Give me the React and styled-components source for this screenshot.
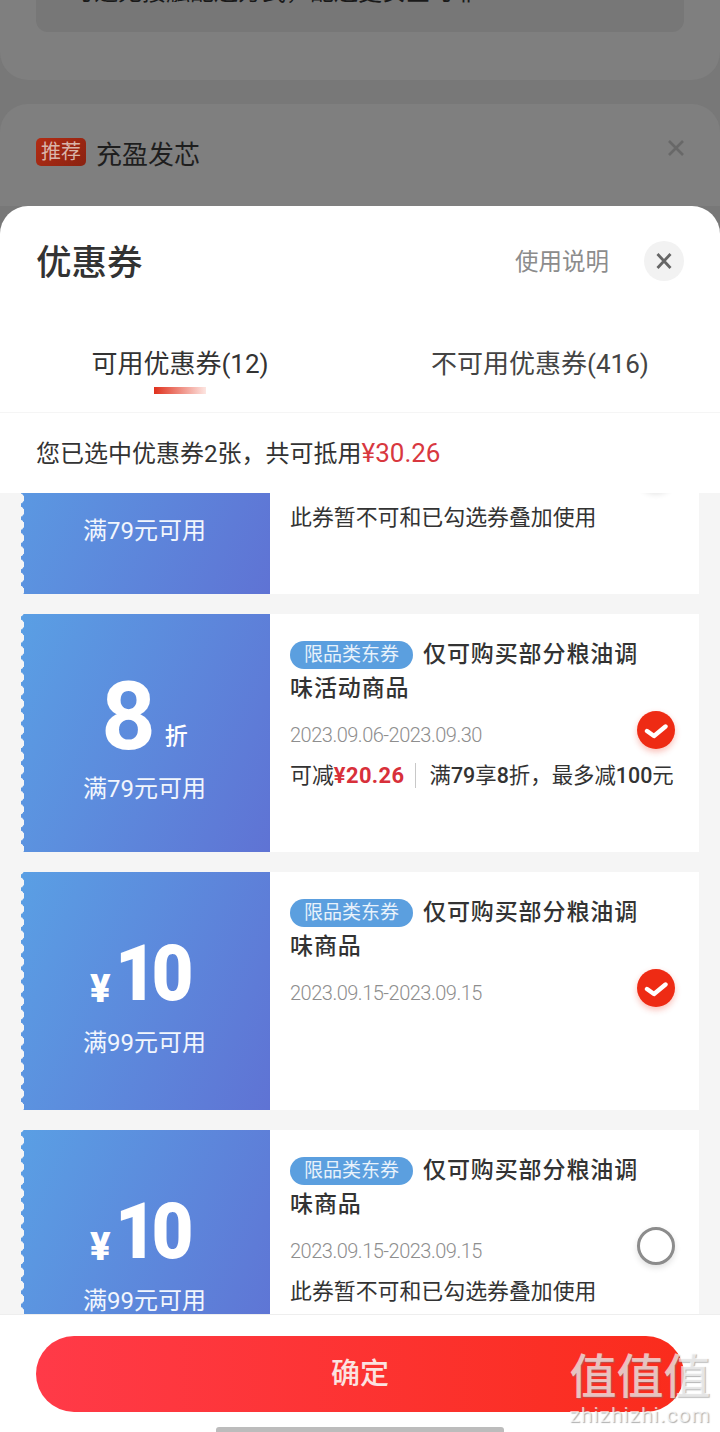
import React from 'react'
import styled, { createGlobalStyle } from 'styled-components'

const fontStack = `Roboto, "Noto Sans CJK SC", sans-serif`

const coupons = [
  {
    id: 1,
    kind: 'rate',
    value: '8',
    unit: '折',
    limit: '满79元可用',
    title: '仅可购买部分粮油调味活动商品',
    date: '2023.09.06-2023.09.30',
    blocked: true,
  },
  {
    id: 2,
    kind: 'rate',
    value: '8',
    unit: '折',
    limit: '满79元可用',
    title: '仅可购买部分粮油调味活动商品',
    date: '2023.09.06-2023.09.30',
    saving: '¥20.26',
    rule: '满79享8折，最多减100元',
    checked: true,
  },
  {
    id: 3,
    kind: 'cash',
    value: '10',
    limit: '满99元可用',
    title: '仅可购买部分粮油调味商品',
    date: '2023.09.15-2023.09.15',
    checked: true,
  },
  {
    id: 4,
    kind: 'cash',
    value: '10',
    limit: '满99元可用',
    title: '仅可购买部分粮油调味商品',
    date: '2023.09.15-2023.09.15',
    blocked: true,
  },
]

// the digits in the rule line are a bit heavier than the words round them
function RuleText({ text }) {
  return text.split(/(\d+)/).map((part, i) => (/\d/.test(part) ? <RuleNumber key={i}>{part}</RuleNumber> : part))
}

function Coupon({ coupon }) {
  const isRate = coupon.kind === 'rate'

  return (
    <Card>
      <Face>
        <Amount $height={isRate ? 83 : 79}>
          {isRate ? (
            <>
              <RateValue>{coupon.value}</RateValue>
              <RateUnit>{coupon.unit}</RateUnit>
            </>
          ) : (
            <>
              <Yen>¥</Yen>
              <CashValue>{coupon.value}</CashValue>
            </>
          )}
        </Amount>
        <Limit>{coupon.limit}</Limit>
      </Face>
      <Details>
        <Title>
          <Tag>限品类东券</Tag>
          {coupon.title}
        </Title>
        <DateText>{coupon.date}</DateText>
        {coupon.saving && (
          <Note>
            可减<Saving>{coupon.saving}</Saving>
            <NoteRule>
              <RuleText text={coupon.rule} />
            </NoteRule>
          </Note>
        )}
        {coupon.blocked && <Note>此券暂不可和已勾选券叠加使用</Note>}
        <Radio $checked={coupon.checked}>
          {coupon.checked && (
            <svg width="24" height="18" viewBox="0 0 24 18" fill="none">
              <path d="M3 10 L10 15 L21.5 5.5" stroke="#fff" strokeWidth="4.4" strokeLinecap="round" strokeLinejoin="round" />
            </svg>
          )}
        </Radio>
      </Details>
    </Card>
  )
}

export default function App() {
  return (
    <>
      <GlobalStyle />
      <Page>
        <Backdrop>
          <ClippedPanel>
            <ClippedBox>
              <ClippedText>可选无接触配送方式，配送更安全可靠</ClippedText>
            </ClippedBox>
          </ClippedPanel>
          <TipPanel>
            <TipBadge>推荐</TipBadge>
            <TipText>充盈发芯</TipText>
            <TipClose>
              <svg width="20" height="20" viewBox="0 0 20 20" fill="none">
                <path d="M3 3 L17 17 M17 3 L3 17" stroke="#686868" strokeWidth="2.6" />
              </svg>
            </TipClose>
          </TipPanel>
        </Backdrop>

        <Sheet>
          <Header>
            <SheetTitle>优惠券</SheetTitle>
            <HelpLink>使用说明</HelpLink>
            <CloseButton>
              <svg width="20" height="20" viewBox="0 0 20 20" fill="none">
                <path d="M3.5 3 L16.5 17 M16.5 3 L3.5 17" stroke="#666" strokeWidth="2.8" />
              </svg>
            </CloseButton>
          </Header>

          <Tabs>
            <Tab $active>
              可用优惠券(12)
              <TabMark />
            </Tab>
            <Tab>不可用优惠券(416)</Tab>
          </Tabs>

          <Summary>
            您已选中优惠券2张，共可抵用<SummaryAmount>¥30.26</SummaryAmount>
          </Summary>

          <List>
            <ListInner>
              {coupons.map((coupon) => (
                <Coupon key={coupon.id} coupon={coupon} />
              ))}
            </ListInner>
          </List>

          <Footer>
            <ConfirmButton>确定</ConfirmButton>
            <HomeBar />
          </Footer>
        </Sheet>

        <Watermark>
          <WatermarkMark>值值值</WatermarkMark>
          <WatermarkSite>zhizhizhi.com</WatermarkSite>
        </Watermark>
      </Page>
    </>
  )
}

const GlobalStyle = createGlobalStyle`
  html, body {
    margin: 0;
    padding: 0;
    background: #787878;
  }

  * {
    box-sizing: border-box;
  }
`

const Page = styled.div`
  position: relative;
  width: 720px;
  height: 1432px;
  overflow: hidden;
  display: flex;
  flex-direction: column;
  background: #787878;
  font-family: ${fontStack};
  color: #333;
`

const Backdrop = styled.div`
  height: 206px;
  flex-shrink: 0;
  display: flex;
  flex-direction: column;
  gap: 24px;
`

const ClippedPanel = styled.div`
  height: 80px;
  flex-shrink: 0;
  padding: 0 36px;
  background: #7f7f7f;
  border-radius: 0 0 28px 28px;
`

const ClippedBox = styled.div`
  height: 32px;
  padding-left: 34px;
  overflow: hidden;
  background: #777;
  border-radius: 0 0 12px 12px;
`

const ClippedText = styled.div`
  margin-top: -25px;
  font-size: 24px;
  line-height: 34px;
  white-space: nowrap;
  color: #1a1a1a;
`

const TipPanel = styled.div`
  flex: 1;
  display: flex;
  align-items: flex-start;
  padding: 34px 34px 0 36px;
  background: #7f7f7f;
  border-radius: 28px 28px 0 0;
`

const TipBadge = styled.span`
  width: 50px;
  height: 28px;
  margin-right: 10px;
  border-radius: 5px;
  background: linear-gradient(135deg, #b22c14, #8a2211);
  color: #d9b5aa;
  font-size: 20px;
  line-height: 28px;
  text-align: center;
`

const TipText = styled.span`
  flex: 1;
  font-size: 26px;
  line-height: 34px;
  color: #1e1e1e;
`

const TipClose = styled.span`
  display: flex;
`

const Sheet = styled.div`
  flex: 1;
  min-height: 0;
  display: flex;
  flex-direction: column;
  background: #fff;
  border-radius: 28px 28px 0 0;
`

const Header = styled.div`
  height: 110px;
  flex-shrink: 0;
  display: flex;
  align-items: center;
  padding: 0 36px;
`

const SheetTitle = styled.h1`
  flex: 1;
  margin: 4px 0 0;
  font-size: 35.5px;
  font-weight: 500;
  line-height: 48px;
  color: #333;
`

const HelpLink = styled.span`
  margin: 0 35px 2px 0;
  font-size: 23.5px;
  color: #8c8c8c;
`

const CloseButton = styled.span`
  width: 40px;
  height: 40px;
  display: flex;
  align-items: center;
  justify-content: center;
  border-radius: 50%;
  background: #f2f2f2;
`

const Tabs = styled.div`
  height: 97px;
  flex-shrink: 0;
  display: flex;
  border-bottom: 1px solid #f5f5f5;
`

const Tab = styled.div`
  position: relative;
  width: 360px;
  padding-top: 30px;
  font-size: 26px;
  line-height: 36px;
  text-align: center;
  color: ${(props) => (props.$active ? '#333' : '#444')};
`

const TabMark = styled.span`
  position: absolute;
  left: 154px;
  top: 71px;
  width: 52px;
  height: 7px;
  background: linear-gradient(90deg, #e0301c, #fde6e2);
`

const Summary = styled.div`
  height: 80px;
  flex-shrink: 0;
  padding-left: 36px;
  font-size: 24px;
  line-height: 80px;
  color: #333;
`

const SummaryAmount = styled.span`
  font-size: 26px;
  color: #d8383f;
`

const List = styled.div`
  flex: 1;
  min-height: 0;
  overflow: hidden;
  background: #f5f5f5;
`

const ListInner = styled.div`
  display: flex;
  flex-direction: column;
  gap: 20px;
  margin-top: -137px;
  padding: 0 21px;
`

const Card = styled.div`
  height: 238px;
  flex-shrink: 0;
  display: flex;
`

const Face = styled.div`
  position: relative;
  width: 249px;
  flex-shrink: 0;
  display: flex;
  flex-direction: column;
  align-items: center;
  padding: 62px 2px 0 0;
  border-radius: 3px 0 0 3px;
  background: linear-gradient(112deg, #5a9fe4, #5f73d4);
  color: #fff;

  &::before {
    content: '';
    position: absolute;
    left: 0;
    top: 0;
    bottom: 0;
    width: 4px;
    background: radial-gradient(circle at -2.5px 50%, #f5f5f5 5.5px, transparent 6px) 0 4px / 4px 13.2px repeat-y;
  }
`

const Amount = styled.div`
  height: ${(props) => props.$height}px;
  display: flex;
  align-items: flex-end;
`

const RateValue = styled.span`
  font-size: 95px;
  font-weight: 700;
  line-height: 82px;
  margin: 0 9px 1px 0;
`

const RateUnit = styled.span`
  font-size: 23px;
  line-height: 30px;
  font-weight: 500;
  margin-bottom: 7px;
`

const Yen = styled.span`
  font-size: 38px;
  font-weight: 900;
  line-height: 38px;
  margin-right: 4px;
  margin-bottom: 5px;
`

const CashValue = styled.span`
  display: inline-block;
  font-size: 78px;
  font-weight: 900;
  line-height: 78px;
  letter-spacing: -6px;
  transform: scaleX(0.93);
  transform-origin: left center;
  margin-right: 6px;
`

const Limit = styled.div`
  margin-top: 12px;
  font-size: 24px;
  line-height: 36px;
  color: #f2f6fd;
`

const Details = styled.div`
  position: relative;
  flex: 1;
  padding: 24px 20px 0;
  background: #fff;
`

const Title = styled.div`
  max-width: 360px;
  font-size: 23px;
  font-weight: 500;
  line-height: 34px;
  letter-spacing: 0.9px;
  color: #333;
`

const Tag = styled.span`
  display: inline-block;
  width: 123px;
  height: 28px;
  margin-right: 10px;
  border-radius: 14px;
  background: #5b9fdf;
  color: #e8f2fb;
  font-size: 19px;
  font-weight: 400;
  line-height: 28px;
  letter-spacing: 0;
  text-align: center;
  vertical-align: 1px;
`

const DateText = styled.div`
  margin-top: 13px;
  font-size: 20px;
  font-weight: 300;
  line-height: 32px;
  letter-spacing: -0.5px;
  color: #8e8e8e;
`

const Note = styled.div`
  margin-top: 9px;
  font-size: 21.9px;
  line-height: 32px;
  white-space: nowrap;
  color: #333;
`

const Saving = styled.span`
  font-weight: 700;
  letter-spacing: 0.4px;
  color: #d8303a;
`

const NoteRule = styled.span`
  margin-left: 10px;
  padding-left: 14px;
  border-left: 1px solid #c8c8c8;
  font-size: 21.4px;
`

const RuleNumber = styled.span`
  font-weight: 500;
`

const Radio = styled.span`
  position: absolute;
  top: 97px;
  right: 24px;
  width: 38px;
  height: 38px;
  display: flex;
  align-items: center;
  justify-content: center;
  border-radius: 50%;
  background: ${(props) => (props.$checked ? '#ee2b14' : '#fff')};
  border: ${(props) => (props.$checked ? 'none' : '3px solid #8c8c8c')};
  box-shadow: ${(props) => (props.$checked ? '0 3px 6px rgba(238, 43, 20, 0.3)' : '0 3px 6px rgba(0, 0, 0, 0.12)')};
`

const Footer = styled.div`
  position: relative;
  height: 118px;
  flex-shrink: 0;
  padding: 21px 36px 0;
  background: #fff;
  border-top: 1px solid #eee;
`

const ConfirmButton = styled.div`
  height: 76px;
  border-radius: 38px;
  background: linear-gradient(90deg, #ff3a48, #fa2c1c);
  color: #fbe3e1;
  font-size: 29px;
  font-weight: 500;
  line-height: 77px;
  text-align: center;
`

const HomeBar = styled.div`
  position: absolute;
  left: 216px;
  bottom: 0;
  width: 288px;
  height: 5px;
  border-radius: 3px 3px 0 0;
  background: #bcbcbc;
`

const Watermark = styled.div`
  position: absolute;
  right: 9px;
  bottom: 6px;
  width: 142px;
  display: flex;
  flex-direction: column;
  align-items: center;
  pointer-events: none;
`

const WatermarkMark = styled.div`
  font-size: 47px;
  font-weight: 500;
  line-height: 54px;
  white-space: nowrap;
  color: rgba(255, 255, 255, 0.68);
  text-shadow: 1px 1px 1px rgba(120, 120, 120, 0.55);
`

const WatermarkSite = styled.div`
  font-size: 21px;
  line-height: 22px;
  letter-spacing: 1px;
  color: rgba(255, 255, 255, 0.7);
  text-shadow: 1px 1px 1px rgba(120, 120, 120, 0.6);
`
